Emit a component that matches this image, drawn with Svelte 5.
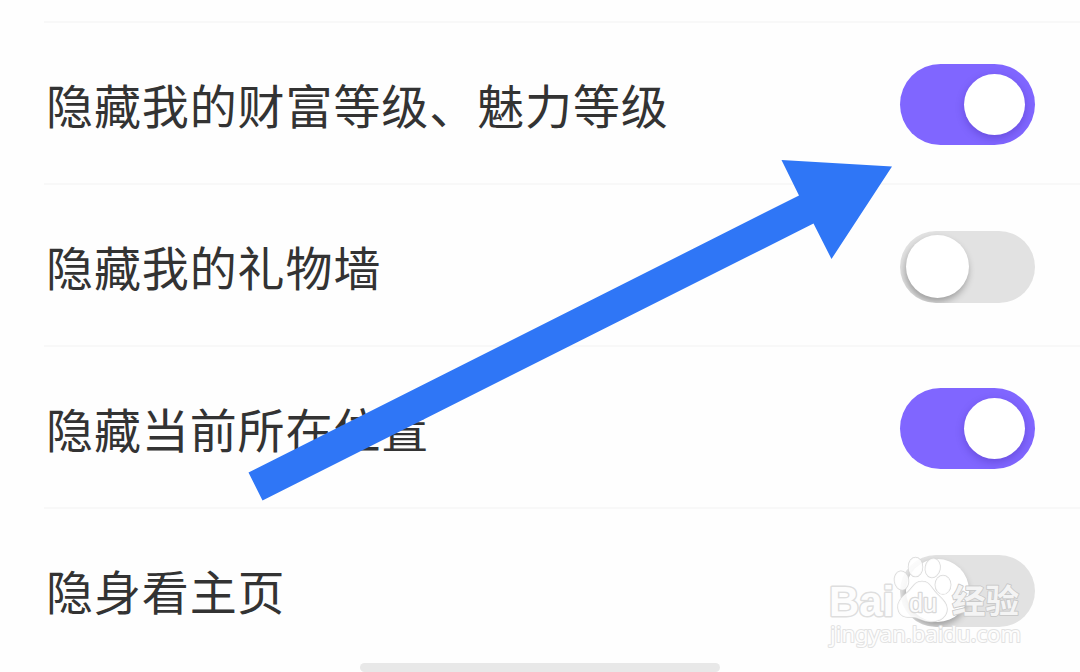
<script>
  let settings = $state([
    { label: '隐藏我的财富等级、魅力等级', on: true },
    { label: '隐藏我的礼物墙', on: false },
    { label: '隐藏当前所在位置', on: true },
    { label: '隐身看主页', on: false },
  ]);
</script>

<main class="page">
  <div class="settings">
    {#each settings as item}
      <div class="row">
        <span class="label">{item.label}</span>
        <button
          class="switch"
          class:on={item.on}
          role="switch"
          aria-checked={item.on}
          aria-label={item.label}
          onclick={() => { item.on = !item.on; }}
        >
          <span class="knob"></span>
        </button>
      </div>
    {/each}
  </div>

  <div class="home-bar"></div>

  <svg class="arrow" width="1080" height="672" viewBox="0 0 1080 672" aria-hidden="true">
    <path d="M248.5 472.5 L799 195.5 L781.5 160 L892 166.5 L831.5 259 L813.5 223.5 L262.5 500.5 Z" fill="#2f76f6" />
  </svg>

  <svg class="watermark" width="210" height="102" viewBox="820 550 210 102">
    <g class="shape">
      <ellipse cx="901.5" cy="580.5" rx="7" ry="9.3" transform="rotate(-8 901.5 580.5)" />
      <ellipse cx="915.5" cy="567" rx="7" ry="9.5" />
      <ellipse cx="932.7" cy="568" rx="7.3" ry="9.5" transform="rotate(12 932.7 568)" />
      <ellipse cx="943" cy="584.8" rx="7.7" ry="9.3" />
      <path d="M922 581.5 C914 581.5 913 588 907 593 C901 598 897.5 602 898 608 C899 616 905 618 913 617 C919 617 922 621.5 931 621.5 C941 621.5 947 616 947 609 C947 603 942 599 937 594 C931 588 930 581.5 922 581.5 Z" />
    </g>
    <text class="brand" x="829" y="616" textLength="65" lengthAdjust="spacingAndGlyphs">Bai</text>
    <text class="du" x="909" y="611.5" textLength="28" lengthAdjust="spacingAndGlyphs">du</text>
    <text class="jingyan" x="952" y="613" textLength="67" lengthAdjust="spacingAndGlyphs">经验</text>
    <text class="url" x="830" y="642" textLength="191" lengthAdjust="spacingAndGlyphs">jingyan.baidu.com</text>
  </svg>
</main>

<style>
  :global(body) {
    margin: 0;
    background: #fefefe;
  }

  .page {
    position: relative;
    display: flex;
    flex-direction: column;
    width: 1080px;
    height: 672px;
    box-sizing: border-box;
    padding-top: 21px;
    overflow: hidden;
    background: #fefefe;
    font-family: "Noto Sans CJK SC", sans-serif;
  }

  .settings {
    flex: none;
    height: 641px;
    margin-left: 44px;
    overflow: hidden;
  }

  .row {
    display: flex;
    align-items: center;
    justify-content: space-between;
    box-sizing: border-box;
    height: 162px;
    padding: 4px 45px 0 2px;
    border-top: 2px solid #f8f8f8;
  }

  .label {
    margin-bottom: 2px;
    color: #333;
    font-size: 47px;
    line-height: 60px;
    letter-spacing: 0.9px;
    white-space: nowrap;
  }

  .switch {
    display: flex;
    flex: none;
    align-items: center;
    box-sizing: border-box;
    width: 135px;
    height: 72px;
    padding: 0 6px 1px;
    border: none;
    border-radius: 36px;
    background: #e2e2e2;
    overflow: hidden;
    cursor: pointer;
  }

  .knob {
    width: 63px;
    height: 63px;
    border-radius: 50%;
    background: #fff;
    box-shadow: -1px 4px 7px rgba(0, 0, 0, 0.3);
  }

  .switch.on {
    justify-content: flex-end;
    height: 81px;
    margin-bottom: 2px;
    padding: 0 10px;
    border-radius: 41px;
    background: #8066ff;
  }

  .switch.on .knob {
    width: 61px;
    height: 61px;
    box-shadow: 0 3px 9px rgba(30, 0, 120, 0.25);
  }

  .home-bar {
    flex: none;
    align-self: center;
    width: 360px;
    height: 9px;
    margin-top: 1px;
    border-radius: 5px;
    background: #e8e8e8;
  }

  .arrow {
    position: absolute;
    top: 0;
    left: 0;
    pointer-events: none;
  }

  .watermark {
    position: absolute;
    top: 550px;
    left: 820px;
    pointer-events: none;
  }

  .shape,
  .watermark text {
    fill: rgba(255, 255, 255, 0.85);
    stroke: #d9d9d9;
    stroke-width: 1.5px;
    stroke-linejoin: round;
    paint-order: stroke;
  }

  .watermark .brand {
    font: bold 42px "Liberation Sans", sans-serif;
    stroke-width: 3px;
    stroke: #dedede;
    fill: #fdfdfd;
  }

  .watermark .du {
    font: 25px "Liberation Sans", sans-serif;
    stroke-width: 2.6px;
    fill: #fcfcfc;
  }

  .watermark .jingyan {
    font: bold 33px "Noto Sans CJK SC", sans-serif;
    stroke: #c9c9c9;
    stroke-width: 1.8px;
    fill: #f4f4f4;
  }

  .watermark .url {
    font: 22px "Noto Sans", sans-serif;
    stroke-width: 2px;
    stroke: #e2e2e2;
    fill: #fdfdfd;
  }
</style>
